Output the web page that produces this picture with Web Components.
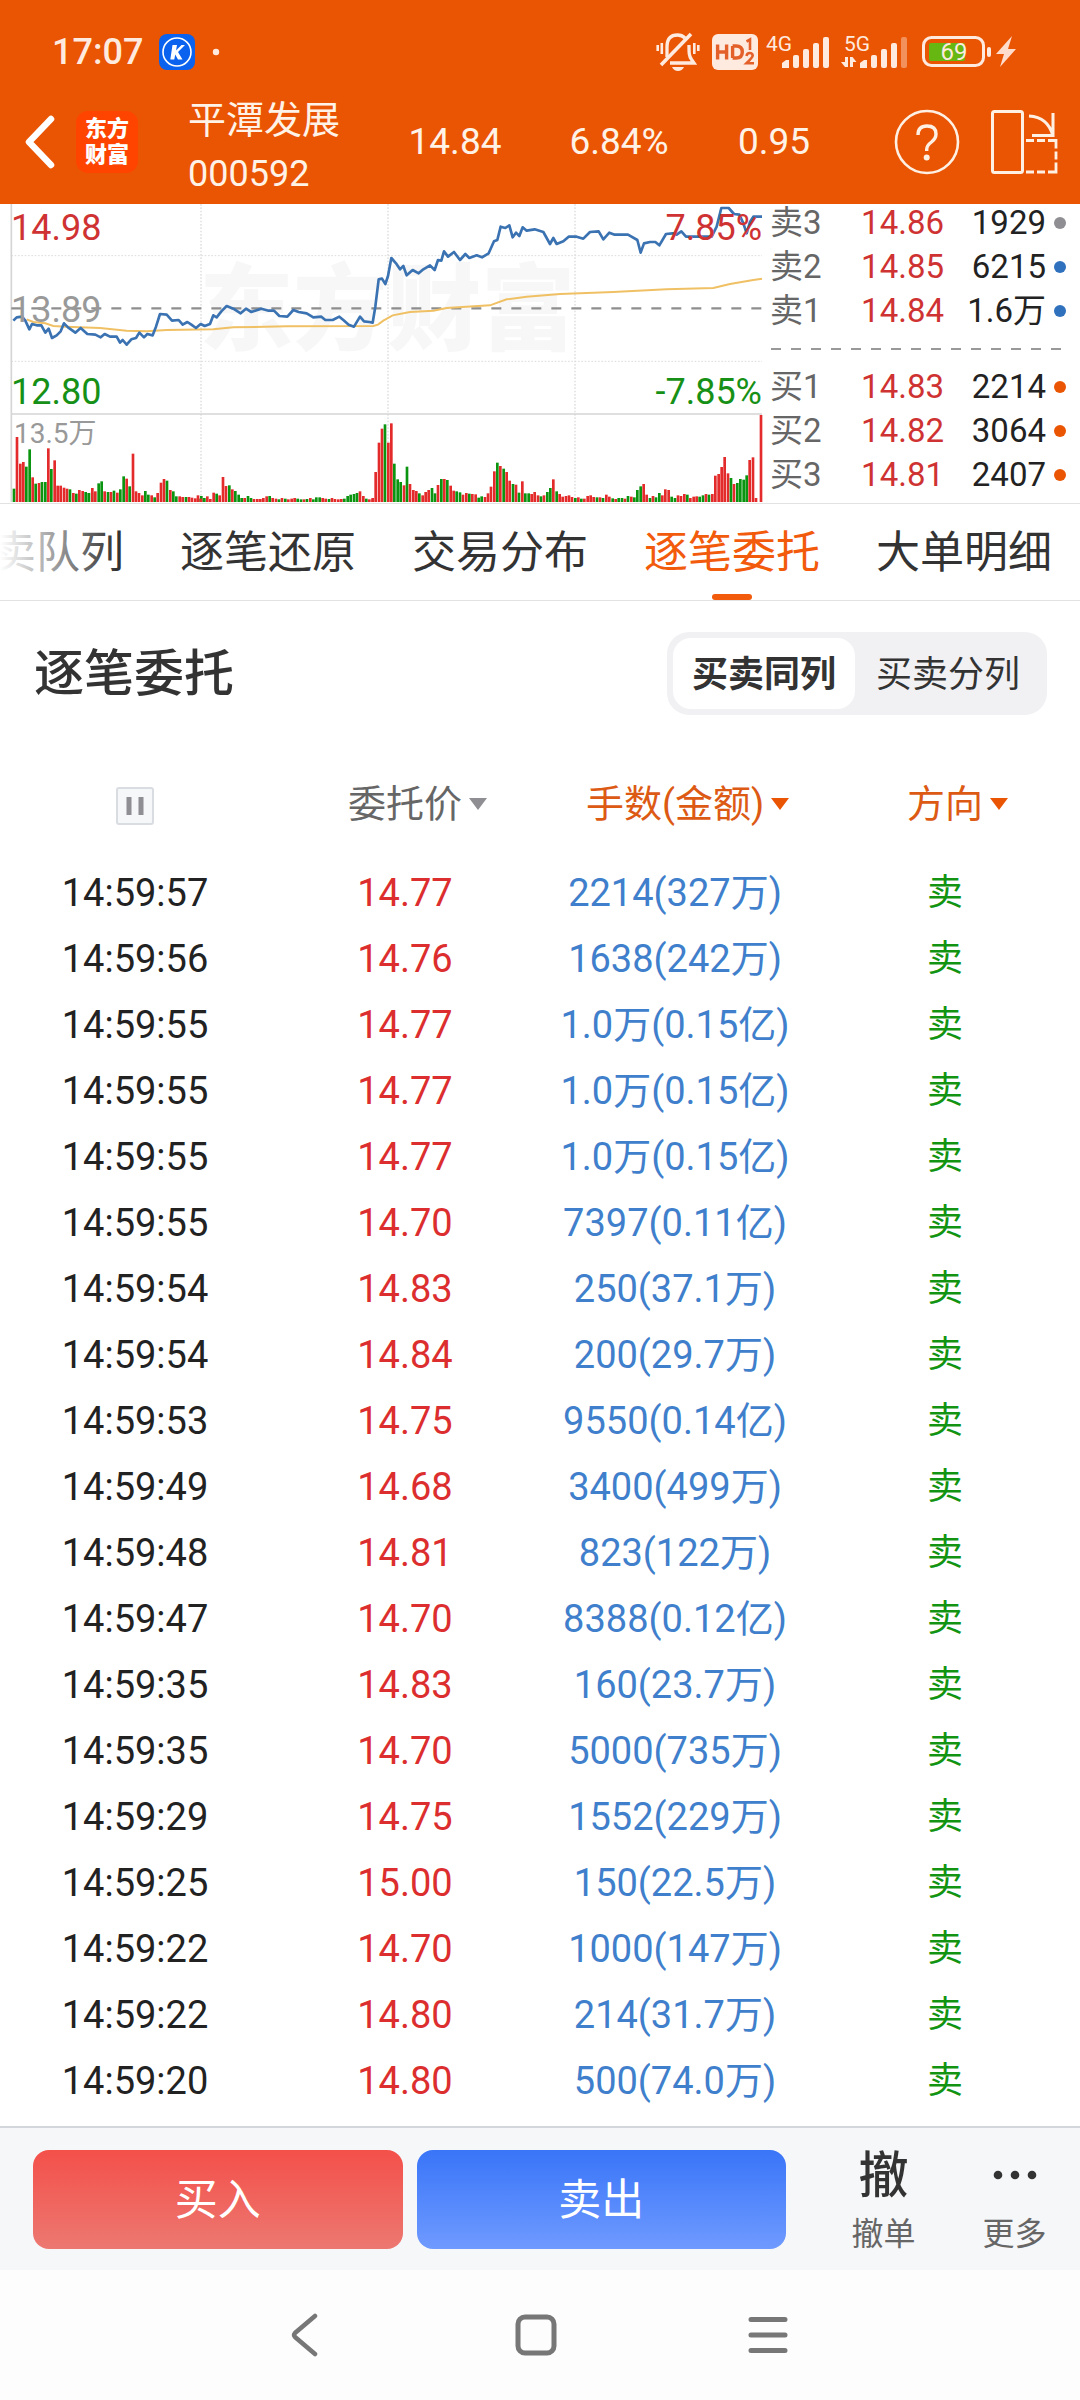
<!DOCTYPE html>
<html lang="zh-CN">
<head>
<meta charset="utf-8">
<meta name="viewport" content="width=device-width">
<title>平潭发展 000592</title>
<style>
body{margin:0;background:#fff;color:#222;font-family:Roboto,"Noto Sans CJK SC",sans-serif;}
stock-page{min-height:100vh}
</style>
</head>
<body>
<stock-page>
  <status-bar slot="top"></status-bar>
  <stock-header slot="top" name="平潭发展" code="000592" price="14.84" percent="6.84%" change="0.95"></stock-header>
  <quote-panel slot="top"><minute-chart></minute-chart><order-book></order-book></quote-panel>
  <tab-strip>卖队列,逐笔还原,交易分布,逐笔委托,大单明细</tab-strip>
  <section-head><span>逐笔委托</span></section-head>
  <order-table></order-table>
  <trade-bar slot="bottom"></trade-bar>
  <system-nav slot="bottom"></system-nav>
</stock-page>
<script>
const define = (name, html, setup) => customElements.define(name, class extends HTMLElement {
  connectedCallback() {
    if (this.shadowRoot) return;
    const root = this.attachShadow({mode: 'open'});
    const t = document.createElement('template');
    t.innerHTML = `<style>:host,*{box-sizing:border-box}button{font:inherit;color:inherit;background:none;border:0;padding:0;margin:0;cursor:pointer}svg{display:block;flex:none}</style>` + (typeof html === 'function' ? html(this) : html);
    root.append(t.content.cloneNode(true));
    if (setup) setup(root, this);
  }
});

define('stock-page', `
<style>:host{display:flex;flex-direction:column}main{flex:1}</style>
<slot name="top"></slot><main><slot></slot></main><slot name="bottom"></slot>`);

define('status-bar', `
<style>
:host{display:flex;justify-content:space-between;align-items:center;height:90px;padding:14px 64px 0 52px;background:#ea5504;color:#ffeadf}
.left{display:flex;align-items:center;gap:16px}
.time{font-size:36px;line-height:44px;font-weight:500}
.right{display:flex;align-items:center;gap:4px}
svg{overflow:visible}
svg text{font-family:Roboto,sans-serif;fill:#ffeadf}
.hd{margin:0 0 0 8px}
.net{margin-left:4px}
.bat{margin-left:8px}
</style>
<div class="left"><span class="time">17:07</span>
<svg width="36" height="36" viewBox="0 0 36 36"><rect width="36" height="36" rx="8" fill="#0a62ee"/><circle cx="18" cy="18" r="14" fill="none" stroke="#fff" stroke-width="1.6"/><path d="M13.500 11h4.500l-1 5.500 5.500-5.500H26l-7 7 4.500 7.500H19l-2.800-5-.9 5h-4z" fill="#fff"/></svg>
<svg width="10" height="10"><circle cx="5" cy="5" r="3.200" fill="#ffeadf"/></svg></div>
<div class="right">
<svg width="44" height="40" viewBox="0 0 44 40" fill="none" stroke="#ffeadf" stroke-width="3.300"><path d="M1.700 13v6M5.800 11v11M38.300 11v11M42.300 13v6" stroke-width="2.600"/><path d="M11 25V15C11 7 15 3 21.500 3c3 0 5.500 1 7.500 3M33 13c0 8 0 11 2.500 14.500L38 31H14"/><path d="M5 33L35 2" stroke-width="3.600"/><path d="M16 35h12q-2 4-6 4t-6-4z" fill="#ffeadf" stroke="none"/></svg>
<svg class="hd" width="46" height="36" viewBox="0 0 46 36"><rect width="46" height="36" rx="6" fill="#ffeadf"/><g fill="none" stroke="#e4602a" stroke-width="3.400"><path d="M5.600 10.500v15M14.600 10.500v15M5.600 18h9M20.600 12v12M20.600 12h3.500q6.200 0 6.200 6t-6.200 6h-3.500"/><path d="M34.500 7.500l3.500-2V16M34.500 22q.5-3 3.200-3t3 2.500q0 1.800-6.200 7.800h7.500" stroke-width="2.600"/></g></svg>
<svg class="net" width="66" height="36" viewBox="0 0 66 36"><text x="0" y="17" font-size="21">4G</text><g fill="#ffeadf"><path d="M16 34v-5l4-3h3v8z"/><rect x="27" y="21" width="6" height="13" rx="2"/><rect x="37" y="15" width="6" height="19" rx="2"/><rect x="47" y="9" width="6" height="25" rx="2"/><rect x="57" y="3" width="6" height="31" rx="2"/></g></svg>
<svg class="net" width="70" height="36" viewBox="0 0 70 36"><text x="4" y="17" font-size="21">5G</text><g fill="#ffeadf"><path d="M5 23h3v10H5l-4-5h4zM10 33h3v-5h3.500l-4-5H10z"/><path d="M20 34v-5l4-3h3v8z"/><rect x="31" y="21" width="6" height="13" rx="2"/><rect x="41" y="15" width="6" height="19" rx="2"/><rect x="51" y="9" width="6" height="25" rx="2"/><rect x="61" y="3" width="6" height="31" rx="2" opacity=".4"/></g></svg>
<svg class="bat" width="70" height="32" viewBox="0 0 70 32"><rect x="1.500" y="1.500" width="60" height="28" rx="8" fill="none" stroke="#ffeadf" stroke-width="3"/><rect x="7" y="7" width="36" height="18" rx="2" fill="#66b712"/><rect x="65" y="11" width="4" height="10" rx="2" fill="#ffeadf"/><text x="32" y="24" font-size="24" text-anchor="middle">69</text></svg>
<svg width="20" height="32" viewBox="0 0 20 32"><path d="M16 0L0 18h8L4 31 20 13h-8z" fill="#ffdccb"/></svg>
</div>`);

define('stock-header', el => `
<style>
:host{display:flex;align-items:center;height:114px;background:#ea5504;color:#fff3e8;padding:0 22px 10px 24px;font-size:38px}
.back{width:52px;height:80px;display:flex;align-items:center}
.logo{width:62px;height:62px;border-radius:12px;background:#ff4400;color:#fff;font-size:22px;line-height:26px;font-weight:900;display:flex;align-items:center;justify-content:center;text-align:center}
.id{width:176px;margin:10px 0 0 50px}
.id span{display:block;line-height:54px}
.id .code{font-size:36px}
.nums{flex:1;display:grid;grid-template-columns:182px 146px 164px;justify-items:center;font-size:37px;line-height:48px}
.tools{display:flex;gap:30px;align-items:center}
</style>
<button class="back" aria-label="返回"><svg width="32" height="54" viewBox="0 0 32 54"><path d="M27 4L5 27l22 23" fill="none" stroke="#fff" stroke-width="6.500" stroke-linecap="round" stroke-linejoin="round"/></svg></button>
<div class="logo">东方<br>财富</div>
<div class="id"><span>${el.getAttribute('name')}</span><span class="code">${el.getAttribute('code')}</span></div>
<div class="nums"><span>${el.getAttribute('price')}</span><span>${el.getAttribute('percent')}</span><span>${el.getAttribute('change')}</span></div>
<div class="tools">
<button aria-label="帮助"><svg width="66" height="66" viewBox="0 0 66 66" fill="none" stroke="#fff0e4"><circle cx="33" cy="33" r="31" stroke-width="2.600"/><path d="M24 26q0-9 9-9t9 8q0 4.500-4.500 8-4.800 3.500-4.800 7.500v1.500" stroke-width="3.400"/><circle cx="32.700" cy="48.500" r="3" fill="#fff0e4" stroke="none"/></svg></button>
<button aria-label="横屏"><svg width="68" height="66" viewBox="0 0 68 66" fill="none" stroke="#fff0e4" stroke-width="3"><rect x="2.500" y="2.500" width="30" height="61" rx="2"/><path d="M39 7q19 1 24 20M63 4v22.500H42" /><path d="M36 31.500h8m3 0h8m3 0h8v8m0 3v8m0 3v9.500h-8m-3 0h-8m-3 0h-8" stroke-width="2.800"/></svg></button>
</div>`);

define('quote-panel', `
<style>:host{display:flex;height:299px;overflow:hidden}::slotted(minute-chart){flex:1;min-width:0}::slotted(order-book){flex:none;width:310px}</style><slot></slot>`);

/* Volume runs: start x, then bar colour (r/g) and height. */
const volume = [
 [42,'g40 r195 r115 r120 g106 g158 r74 g55 r57 g60 g60 r161 g99 r125 r49 r49 r43 r40 g38 r27 g25 r36 r33 g30 g27 g28'],
 [277,'r42 r32 g56 g62 r32 g30 r30 g34 r28 g38 g77 r70 g47 r145 r32 r27 r20 g33 g22 r20 g14 r27 r58 r69 g64 r36 g32 g17 r17 r15 g15 r15 r13 r11 g10 g18'],
 [594,'r20 r10 g12 r17 r9 r28 g25 r20 r75 r48 g50 r38 g33 g22 g12 r12 g18 g12 r9 r9 r9 r12 r17 g18 r12 r10 g8 r12 g10 r8 r10 r12 g10 g8 r8 g9 r12 g8 g14 g14 r12 r10 g9 r12 r9 r8 r9 g10 g18 g22 g24 g27 r32 r18 g10 r8 r8'],
 [1118,'r12 r90 r178 r220 g233 r178 r236 g115 g68 g60 r50 g106 r54 r36 r33 g26 r20 r30 r36 g42 g26 r51 g69 r69 g66 r49 r34 g32 g29 r22 r27 g25 r24 r23 g13 g17 r15 r26 r46 r92 g118 r108 g100 r90 r64 g54 r52 g28 r62 g26 g26 r24 r30 r20 g17 r20 g30 g42 r68 g32 r24 r16 r18 r20 r15 g12 r14'],
 [1744,'g10 r10 r18 r20 r15 g14 r14 g12 r22 r16 g11 r9 g12 g12 r10 g18 r16 g14 g36 g47 r54 r22 g12 r18 g14 g27 r20 r38 r36 g16 g12 r20 r18 r24 g22 r12 r16 r17 g16 g20 r24 g22'],
 [2137,'r24 r79 r84 r105 r135 r86 g72 r54 g57 g69 g67 g80 r126 r134 r12'],
 [2283,'r261']];
const bars = volume.map(([x, s]) => s.split(' ').map((b, i) => {
  const h = +b.slice(1);
  return `<rect x="${Math.round(x + i * 9.35) - 4}" y="${906 - h}" width="8" height="${h}" fill="${b[0] === 'r' ? '#e42b2b' : '#0a9410'}"/>`;
}).join('')).join('');

define('minute-chart', `
<style>
:host{display:block;position:relative;height:299px;font-size:36px;line-height:44px}
svg{width:100%;height:299px}
span{position:absolute}
.l{left:11px}.r{right:8px}.red{color:#cf3232}.green{color:#169016}.grey{color:#999}
.t{top:2px}.m{top:84px}.b{top:166px}
.v{top:212px;left:14px;font-size:28px;line-height:36px}
</style>
<svg viewBox="0 12 2310 897" preserveAspectRatio="none">
<text x="598" y="430" font-size="282" font-weight="900" fill="#f7f7f7" font-family="Noto Sans CJK SC, sans-serif">东方财富</text>
<g stroke="#dcdcdc" stroke-width="4" fill="none" stroke-dasharray="5 5"><path d="M603 12V906M1164 12V906M1725 12V906"/><path d="M34 167H2286M34 484H2286" stroke-width="3"/></g>
<path d="M34 12V906M34 642H2286" stroke="#d5d5d5" stroke-width="5" fill="none"/>
<path d="M34 325H2286" stroke="#8e8e8e" stroke-width="7" stroke-dasharray="30 30"/>
${bars}
<path d="M80 358L100 366 136 370 160 378 200 380 300 384 380 392 440 394 500 390 640 388 700 382 860 379 1120 378 1134 374 1150 362 1178 346 1230 336 1300 332 1340 324 1470 316 1520 298 1580 290 1680 282 1840 276 2000 268 2140 264 2190 252 2260 240 2286 236" fill="none" stroke="#f0c064" stroke-width="6"/>
<path d="M40 362L50 352 66 350 76 362 88 388 96 372 110 376 124 376 136 398 146 386 156 414 170 406 182 394 192 370 204 382 226 398 242 384 262 402 286 404 302 412 314 402 330 410 350 410 360 428 368 420 380 434 394 418 408 414 418 398 432 412 442 402 458 406 468 380 480 342 500 344 516 362 536 360 548 374 562 366 574 374 588 384 602 372 614 378 630 372 640 346 650 352 664 334 680 318 700 326 722 340 738 326 754 336 784 326 806 332 822 332 838 348 862 350 880 330 896 336 920 340 940 352 964 350 976 360 998 360 1018 350 1030 360 1046 374 1062 380 1080 350 1092 364 1108 366 1118 368 1126 320 1136 238 1146 236 1156 252 1164 228 1174 174 1188 190 1200 208 1210 198 1220 226 1238 210 1256 220 1270 208 1290 196 1304 210 1314 180 1324 182 1332 154 1344 170 1362 156 1380 180 1396 162 1408 174 1430 166 1446 172 1466 160 1482 124 1492 120 1502 80 1516 84 1528 76 1538 112 1548 98 1558 108 1568 82 1580 92 1604 88 1630 96 1650 132 1660 114 1670 132 1690 124 1706 110 1730 110 1750 116 1770 96 1796 94 1810 118 1828 98 1844 104 1884 104 1912 120 1922 158 1932 130 1950 126 1966 126 1978 136 1998 102 2018 100 2030 104 2044 94 2058 110 2080 110 2135 110 2150 80 2164 24 2186 24 2202 42 2218 44 2230 70 2240 100 2250 66 2260 50 2286 50" fill="none" stroke="#3a72b2" stroke-width="8" stroke-linejoin="round"/>
</svg>
<span class="l t red">14.98</span><span class="l m grey">13.89</span><span class="l b green">12.80</span>
<span class="r t red">7.85%</span><span class="r b green">-7.85%</span><span class="v grey">13.5万</span>`);

const level = ([n, p, q, c]) => `<div class="row"><span class="n">${n}</span><span class="p">${p}</span><span class="q">${q}</span><i style="background:${c}"></i></div>`;
define('order-book', `
<style>
:host{display:block;font-size:33px}
.group:first-of-type{margin-top:-3px}
.row{display:grid;grid-template-columns:72px 102px 102px 12px;height:44px;line-height:44px;align-items:center;text-align:right}
.n{text-align:left;color:#666}.p{color:#cf3232}
i{width:12px;height:12px;border-radius:6px;margin-left:8px}
hr{border:0;height:2px;margin:15px 9px 15px 1px;background:repeating-linear-gradient(90deg,#999 0 10px,transparent 10px 20px)}
</style>
<div class="group">${[['卖3','14.86','1929','#8e8e93'],['卖2','14.85','6215','#3071be'],['卖1','14.84','1.6万','#3071be']].map(level).join('')}</div>
<hr>
<div>${[['买1','14.83','2214','#ea5504'],['买2','14.82','3064','#ea5504'],['买3','14.81','2407','#ea5504']].map(level).join('')}</div>`);

define('tab-strip', el => `
<style>
:host{display:block;position:relative;overflow:hidden;border-top:1px solid #e2e2e2;border-bottom:1px solid #e2e2e2}
nav{display:flex;gap:56px;margin-left:-8px;height:96px}
button{position:relative;flex:none;font-size:44px;color:#333;white-space:nowrap;padding-bottom:6px}
button[aria-selected=true]{color:#f25a0c}
button[aria-selected=true]::after{content:"";position:absolute;left:50%;bottom:0;width:40px;height:6px;margin-left:-20px;border-radius:3px;background:#f25a0c}
:host::before{content:"";position:absolute;z-index:1;left:0;top:0;bottom:0;width:116px;background:linear-gradient(90deg,#fff,rgba(255,255,255,0));pointer-events:none}
</style>
<nav role="tablist">${el.textContent.trim().split(',').map((t, i) => `<button role="tab" aria-selected="${i === 3}">${t}</button>`).join('')}</nav>`,
root => root.querySelectorAll('button').forEach(b => b.onclick = () => root.querySelectorAll('button').forEach(o => o.setAttribute('aria-selected', o === b))));

define('section-head', `
<style>
:host{display:flex;justify-content:space-between;align-items:center;padding:31px 33px 0 34px}
h1{margin:0;font-size:50px;line-height:72px;font-weight:500;color:#333}
.seg{display:grid;grid-template-columns:182px 186px;height:83px;padding:6px;border-radius:22px;background:#f1f1f4}
.seg button{font-size:36px;color:#333;border-radius:18px;padding-bottom:6px}
.seg .on{background:#fff;font-weight:700}
</style>
<h1><slot></slot></h1>
<div class="seg"><button class="on">买卖同列</button><button>买卖分列</button></div>`);

const orders = `14:59:57 14.77 2214(327万)|14:59:56 14.76 1638(242万)|14:59:55 14.77 1.0万(0.15亿)|14:59:55 14.77 1.0万(0.15亿)|14:59:55 14.77 1.0万(0.15亿)|14:59:55 14.70 7397(0.11亿)|14:59:54 14.83 250(37.1万)|14:59:54 14.84 200(29.7万)|14:59:53 14.75 9550(0.14亿)|14:59:49 14.68 3400(499万)|14:59:48 14.81 823(122万)|14:59:47 14.70 8388(0.12亿)|14:59:35 14.83 160(23.7万)|14:59:35 14.70 5000(735万)|14:59:29 14.75 1552(229万)|14:59:25 15.00 150(22.5万)|14:59:22 14.70 1000(147万)|14:59:22 14.80 214(31.7万)|14:59:20 14.80 500(74.0万)`.split('|').map(r => r.split(' '));
define('order-table', `
<style>
:host{display:block;padding:54px 0 12px}
table{width:100%;table-layout:fixed;border-collapse:collapse;font-size:38px;text-align:center}
th,td{padding:0;height:66px;line-height:56px;font-weight:400}
th{height:91px;padding-bottom:23px;color:#666}
th.hot{color:#dc5a14}
th button{position:relative;vertical-align:middle}
.sort::after{content:"";position:absolute;left:100%;top:22px;margin-left:7px;border:9px solid transparent;border-top:12px solid #8e8e93;border-bottom:0}
.hot .sort::after{border-top-color:#ea5504}
td:nth-child(1){color:#222}td:nth-child(2){color:#dc2e2e}td:nth-child(3){color:#3f7fcc}td:nth-child(4){color:#129412;font-size:36px}
</style>
<table><thead><tr>
<th><button aria-label="暂停"><svg width="38" height="38" viewBox="0 0 38 38"><rect x="1" y="1" width="36" height="36" rx="2" fill="#f6f7f9" stroke="#d9dce1" stroke-width="2"/><path d="M13 10v18M25 10v18" stroke="#8e8e93" stroke-width="5"/></svg></button></th>
<th><button class="sort">委托价</button></th><th class="hot"><button class="sort">手数(金额)</button></th><th class="hot"><button class="sort">方向</button></th>
</tr></thead><tbody>${orders.map(([t, p, a]) => `<tr><td>${t}</td><td>${p}</td><td>${a}</td><td>卖</td></tr>`).join('')}</tbody></table>`);

define('trade-bar', `
<style>
:host{display:flex;align-items:center;gap:14px;height:144px;padding:0 0 0 33px;border-top:2px solid #d3d7dc;background:#f6f7f9}
.buy,.sell{flex:1;height:99px;border-radius:16px;color:#fff;font-size:43px;padding-bottom:6px}
.buy{background:linear-gradient(#f4504a,#ec7871)}
.sell{background:linear-gradient(#3975f8,#6f9aff)}
.more{flex:none;width:280px;display:grid;grid-template-columns:1fr 1fr;padding:0 0 0 18px}
.more button{display:flex;flex-direction:column;align-items:center;font-size:32px;line-height:48px;color:#666}
.more b{height:70px;line-height:72px;font-size:50px;font-weight:500;color:#333}
.more svg{height:70px}
</style>
<button class="buy">买入</button><button class="sell">卖出</button>
<div class="more"><button><b>撤</b>撤单</button><button><svg width="44" height="70" viewBox="0 0 44 70" fill="#333"><circle cx="5" cy="35" r="4.300"/><circle cx="22" cy="35" r="4.300"/><circle cx="39" cy="35" r="4.300"/></svg>更多</button></div>`);

define('system-nav', `
<style>
:host{display:grid;grid-template-columns:1fr 1fr 1fr;height:130px;padding:0 196px 0 188px;background:#fdfdfd}
button{display:flex;align-items:center;justify-content:center}
</style>
<button aria-label="返回"><svg width="28" height="44" viewBox="0 0 28 44"><path d="M25 3L5 20q-2 2 0 4l20 17" fill="none" stroke="#777" stroke-width="4.500" stroke-linecap="round"/></svg></button>
<button aria-label="主页"><svg width="42" height="42" viewBox="0 0 42 42"><rect x="3" y="3" width="36" height="36" rx="7" fill="none" stroke="#777" stroke-width="5"/></svg></button>
<button aria-label="最近任务"><svg width="40" height="40" viewBox="0 0 40 40"><path d="M3 4.500h34M3 20h34M3 35.500h34" stroke="#777" stroke-width="5" stroke-linecap="round"/></svg></button>`);
</script>
</body>
</html>
